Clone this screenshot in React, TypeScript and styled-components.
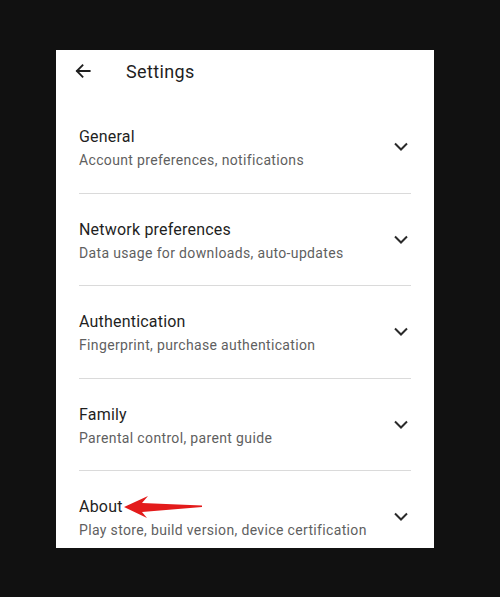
import React from "react";
import styled, { createGlobalStyle } from "styled-components";

const Global = createGlobalStyle`
  html, body { margin: 0; padding: 0; background: #111111; }
  body { font-family: Roboto, "Noto Sans", Arial, sans-serif; }
`;

const Page = styled.div`
  display: flex;
  padding: 50px 0 49px 56px;
  min-height: 597px;
  box-sizing: border-box;
  background: #111111;
`;

const Panel = styled.div`
  width: 378px;
  height: 498px;
  background: #ffffff;
  overflow: hidden;
  display: flex;
  flex-direction: column;
`;

const Header = styled.div`
  height: 42px;
  display: flex;
  align-items: center;
  padding-left: 17px;
  flex-shrink: 0;
`;

const BackButton = styled.span`
  width: 20px;
  height: 20px;
  display: flex;
  align-items: center;
  justify-content: center;
  color: #1f1f1f;
`;

const Title = styled.h1`
  margin: 0 0 0 33px;
  font-size: 18px;
  font-weight: 400;
  color: #1f1f1f;
  letter-spacing: 0.35px;
`;

const List = styled.div`
  display: flex;
  flex-direction: column;
  margin-top: 9px;
`;

const Row = styled.div`
  margin: 0 23px;
  padding: 24px 0 22.5px;
  display: flex;
  align-items: center;
  border-bottom: 1px solid #dadada;
  &:last-child { border-bottom: none; }
`;

const Texts = styled.div`
  flex: 1;
  display: flex;
  flex-direction: column;
`;

const RowTitle = styled.span`
  position: relative;
  align-self: flex-start;
  font-size: 16px;
  line-height: 24px;
  color: #1f1f1f;
  letter-spacing: 0.2px;
`;

const RowSub = styled.span`
  font-size: 14px;
  line-height: 20px;
  margin-top: 1px;
  color: #5f5f5f;
  letter-spacing: 0.35px;
`;

const Chevron = styled.svg`
  width: 24px;
  height: 24px;
  flex-shrink: 0;
  margin-right: -2px;
  margin-top: -3px;
`;

const Pointer = styled.svg`
  position: absolute;
  left: calc(100% + 1px);
  top: 0;
  width: 80px;
  height: 24px;
  overflow: visible;
`;

const items = [
  { t: "General", s: "Account preferences, notifications" },
  { t: "Network preferences", s: "Data usage for downloads, auto-updates" },
  { t: "Authentication", s: "Fingerprint, purchase authentication" },
  { t: "Family", s: "Parental control, parent guide" },
  { t: "About", s: "Play store, build version, device certification", arrow: true },
];

export default function App() {
  return (
    <>
      <Global />
      <Page>
        <Panel>
          <Header>
            <BackButton>
              <svg width="20" height="20" viewBox="0 0 24 24">
                <path d="M20 12H4.8M11.4 5.2L4.6 12l6.8 6.8" fill="none" stroke="#1f1f1f" strokeWidth="2.2" strokeLinecap="square" />
              </svg>
            </BackButton>
            <Title>Settings</Title>
          </Header>
          <List>
            {items.map((it) => (
              <Row key={it.t}>
                <Texts>
                  <RowTitle>
                    {it.t}
                    {it.arrow && (
                      <Pointer viewBox="0 0 80 24">
                        <path d="M0 12 L24 1 L18 8 L78 10.5 L78 12 L18 17 L23 23 Z" fill="#e31b1b" />
                      </Pointer>
                    )}
                  </RowTitle>
                  <RowSub>{it.s}</RowSub>
                </Texts>
                <Chevron viewBox="0 0 24 24">
                  <path d="M6 9.5 L12 15.5 L18 9.5" fill="none" stroke="#2a2a2a" strokeWidth="2" />
                </Chevron>
              </Row>
            ))}
          </List>
        </Panel>
      </Page>
    </>
  );
}
